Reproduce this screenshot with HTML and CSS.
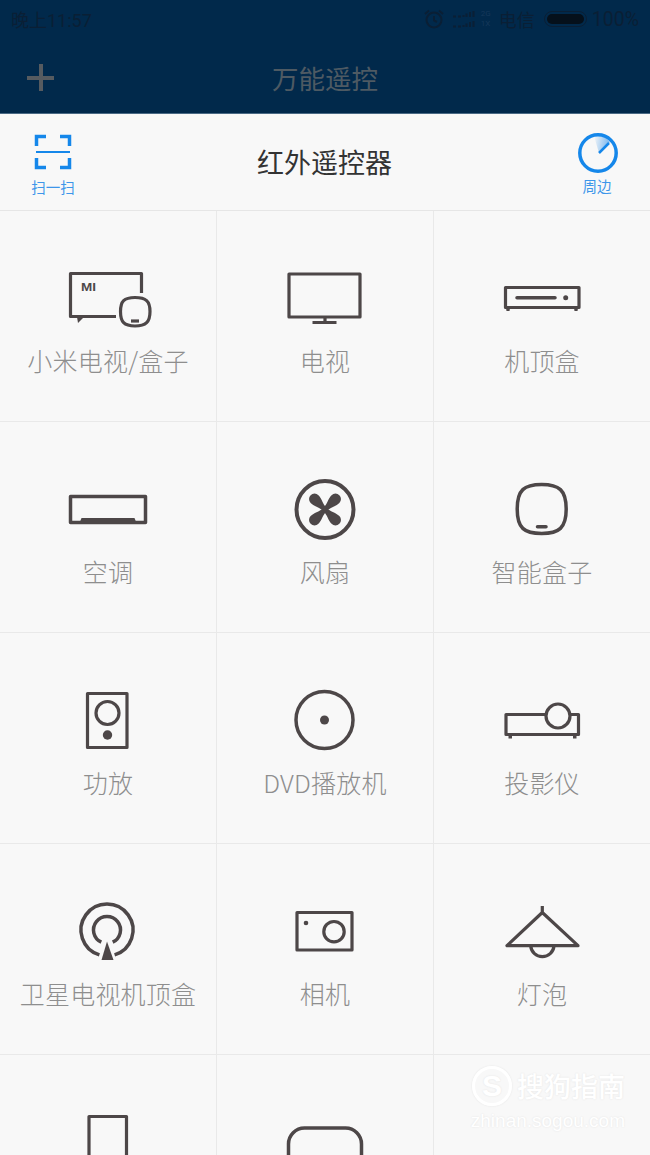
FILE: index.html
```html
<!DOCTYPE html>
<html lang="en">
<head>
    <meta charset="UTF-8">
    <meta name="viewport" content="width=device-width, initial-scale=1.0">
    <title>万能遥控</title>
    <link rel="stylesheet" href="styles.css">
</head>
<body>
    <div class="screen">
        <header class="top">
            <div class="status">
                <span class="time">晚上11:57</span>
                <div class="status-right">
                    <svg class="alarm" width="22" height="20" viewBox="0 0 22 20">
                        <circle cx="11" cy="11" r="7.5"/>
                        <path d="M11 7v4.5l3 1.5M2 5l4-3.5M20 5l-4-3.5"/>
                    </svg>
                    <svg class="signal" width="24" height="20" viewBox="0 0 24 20">
                        <path d="M1 7.500h3M6 7.500h3M11.500 8V6M14.500 8V4.500M18 8V3M21.500 8V2"/>
                        <path d="M1 17.500h3M6 17.500h3M11.500 18V16M14.500 18V14.500M18 18V13M21.500 18V12"/>
                    </svg>
                    <span class="net"><span>2G</span><span>1X</span></span>
                    <span class="carrier">电信</span>
                    <span class="battery"><span class="battery-fill"></span></span>
                    <span class="percent">100%</span>
                </div>
            </div>
            <div class="appbar">
                <span class="plus"></span>
                <h1>万能遥控</h1>
            </div>
        </header>

        <div class="subbar">
            <div class="tool tool-scan">
                <svg width="40" height="36" viewBox="0 0 40 36">
                    <path class="scan-corner" d="M13 2.5H3.500V12M27 2.5h9.500V12M3.500 24v9.500H13M36.500 24v9.500H27"/>
                    <path class="scan-line" d="M3 18h34"/>
                </svg>
                <span>扫一扫</span>
            </div>
            <h2>红外遥控器</h2>
            <div class="tool tool-near">
                <svg width="42" height="42" viewBox="0 0 42 42">
                    <defs>
                        <linearGradient id="sweep" x1="1" y1="0.5" x2="0" y2="0.3">
                            <stop offset="0" stop-color="#1b86e8" stop-opacity="0.6"/>
                            <stop offset="1" stop-color="#1b86e8" stop-opacity="0.04"/>
                        </linearGradient>
                    </defs>
                    <path d="M22 21L17 4A18 18 0 0 1 33 10Z" fill="url(#sweep)"/>
                    <circle class="radar" cx="21" cy="21" r="18.200"/>
                    <path class="radar-hand" d="M22 21L32 11"/>
                </svg>
                <span>周边</span>
            </div>
        </div>

        <div class="grid">
            <div class="cell">
                <svg class="icon" viewBox="0 0 90 70">
                    <path d="M53 55.500H7.500V12.500H78.500V32"/>
                    <path class="solid" d="M14 56h7l-6 6z"/>
                    <text class="mi" x="18" y="30" textLength="15" lengthAdjust="spacingAndGlyphs">MI</text>
                    <path d="M72 36.500C83 36.500 87 40 87 50.500C87 61 83 65 72 65C61 65 57.500 61 57.500 50.500C57.500 40 61 36.500 72 36.500Z"/>
                    <path d="M68 60h8"/>
                </svg>
                <span class="label">小米电视/盒子</span>
            </div>
            <div class="cell">
                <svg class="icon" viewBox="0 0 90 70">
                    <rect x="9" y="13" width="71" height="43"/>
                    <path d="M45 57v4M32.500 61.500h24"/>
                </svg>
                <span class="label">电视</span>
            </div>
            <div class="cell">
                <svg class="icon" viewBox="0 0 90 70">
                    <rect x="8.500" y="26.500" width="73.500" height="20"/>
                    <path class="thick" d="M20 36.700h38"/>
                    <circle class="solid" cx="68.700" cy="36.700" r="2.500"/>
                    <path class="solid" d="M9 47h4l-.5 3h-3zM77 47h4l-.5 3h-3z"/>
                </svg>
                <span class="label">机顶盒</span>
            </div>

            <div class="cell">
                <svg class="icon" viewBox="0 0 90 70">
                    <rect class="bold" x="7.500" y="24.500" width="75" height="26"/>
                    <path class="solid" d="M16.500 51l2-5h53l2 5z"/>
                </svg>
                <span class="label">空调</span>
            </div>
            <div class="cell">
                <svg class="icon" viewBox="0 0 90 70">
                    <circle class="heavy" cx="45" cy="37.500" r="28.500"/>
                    <g transform="translate(45 37.500)">
                        <path class="solid" d="M-2.200 0C-2.500 -6 -5.500 -10 -5.500 -14.800A5.500 5.500 0 0 1 5.500 -14.800C5.500 -10 2.500 -6 2.200 0Z" transform="rotate(45)"/>
                        <path class="solid" d="M-2.200 0C-2.500 -6 -5.500 -10 -5.500 -14.800A5.500 5.500 0 0 1 5.500 -14.800C5.500 -10 2.500 -6 2.200 0Z" transform="rotate(135)"/>
                        <path class="solid" d="M-2.200 0C-2.500 -6 -5.500 -10 -5.500 -14.800A5.500 5.500 0 0 1 5.500 -14.800C5.500 -10 2.500 -6 2.200 0Z" transform="rotate(225)"/>
                        <path class="solid" d="M-2.200 0C-2.500 -6 -5.500 -10 -5.500 -14.800A5.500 5.500 0 0 1 5.500 -14.800C5.500 -10 2.500 -6 2.200 0Z" transform="rotate(315)"/>
                    </g>
                </svg>
                <span class="label">风扇</span>
            </div>
            <div class="cell">
                <svg class="icon" viewBox="0 0 90 70">
                    <path class="bold" d="M44.700 12.500C62 12.500 69.200 18 69.200 37C69.200 56 62 61.500 44.700 61.500C27 61.500 20.200 56 20.200 37C20.200 18 27 12.500 44.700 12.500Z"/>
                    <path class="thick" d="M40.500 54.700h8.500"/>
                </svg>
                <span class="label">智能盒子</span>
            </div>

            <div class="cell">
                <svg class="icon" viewBox="0 0 90 70">
                    <rect x="24.500" y="10.500" width="39.500" height="54"/>
                    <circle cx="44.500" cy="30" r="11.500"/>
                    <circle class="solid" cx="44.500" cy="52" r="4.700"/>
                </svg>
                <span class="label">功放</span>
            </div>
            <div class="cell">
                <svg class="icon" viewBox="0 0 90 70">
                    <circle class="bold" cx="44.500" cy="37" r="28.500"/>
                    <circle class="solid" cx="44.500" cy="37" r="4.500"/>
                </svg>
                <span class="label">DVD播放机</span>
            </div>
            <div class="cell">
                <svg class="icon" viewBox="0 0 90 70">
                    <path d="M49 31.500H9V51.500H81.500V31.500H74"/>
                    <circle cx="61" cy="33" r="12"/>
                    <path class="solid" d="M11.500 52h3.500v3.500h-3.500zM76 52h3.500v3.500H76z"/>
                </svg>
                <span class="label">投影仪</span>
            </div>

            <div class="cell">
                <svg class="icon" viewBox="0 0 90 70">
                    <path class="bold" d="M36.400 60.900A26 26 0 1 1 51.600 60.900"/>
                    <path class="bold" d="M38.300 48.200A13.500 13.500 0 1 1 49.700 48.200"/>
                    <path class="solid" d="M44 47.500L50.500 66H38.500Z"/>
                </svg>
                <span class="label">卫星电视机顶盒</span>
            </div>
            <div class="cell">
                <svg class="icon" viewBox="0 0 90 70">
                    <rect x="17" y="18.500" width="55" height="37.500"/>
                    <circle cx="54" cy="37.700" r="10.200"/>
                    <circle class="solid" cx="26" cy="29" r="2.300"/>
                </svg>
                <span class="label">相机</span>
            </div>
            <div class="cell">
                <svg class="icon" viewBox="0 0 90 70">
                    <path d="M45.300 12v6.500M45.300 18.500L10 51.700H81Z"/>
                    <path d="M33.700 52A11.700 11.700 0 0 0 57 52"/>
                </svg>
                <span class="label">灯泡</span>
            </div>

            <div class="cell">
                <svg class="icon" viewBox="0 0 90 70">
                    <rect x="26" y="11.500" width="37.500" height="60"/>
                </svg>
            </div>
            <div class="cell">
                <svg class="icon" viewBox="0 0 90 70">
                    <rect class="bold" x="8.500" y="23" width="73" height="50" rx="16"/>
                </svg>
            </div>
            <div class="cell"></div>
        </div>

        <div class="watermark">
            <div class="wm-top">
                <span class="wm-logo">S</span>
                <span class="wm-name">搜狗指南</span>
            </div>
            <span class="wm-url">zhinan.sogou.com</span>
        </div>
    </div>
</body>
</html>
```

FILE: styles.css
```css
body {
    margin: 0;
    font-family: "Noto Sans CJK SC", "Noto Sans", sans-serif;
    background-color: #f8f8f8;
}

.screen {
    position: relative;
    width: 650px;
    height: 1155px;
    overflow: hidden;
}

/* dimmed header */
.top {
    height: 113px;
    background-color: #01294b;
    border-bottom: 1px solid #4a6a85;
}

.status {
    display: flex;
    justify-content: space-between;
    align-items: center;
    height: 37px;
    padding: 0 11px;
    font-family: "Roboto", "Noto Sans CJK SC", sans-serif;
    font-size: 18px;
    color: #0a1f35;
}

.status-right {
    display: flex;
    align-items: center;
}

.alarm {
    margin-right: 7px;
    fill: none;
    stroke: #0a1f35;
    stroke-width: 2;
}

.signal {
    margin-right: 5px;
    fill: none;
    stroke: #0a1f35;
    stroke-width: 2;
}

.net {
    display: flex;
    flex-direction: column;
    width: 18px;
    font-size: 8px;
    line-height: 10px;
    color: #15385a;
}

.carrier {
    margin-right: 9px;
    font-family: "Noto Sans CJK SC", sans-serif;
}

.battery {
    display: flex;
    align-items: center;
    width: 43px;
    height: 16px;
    margin-right: 5px;
    padding: 2px;
    box-sizing: border-box;
    border: 1px solid #0a1f35;
    border-radius: 8px;
}

.battery-fill {
    width: 100%;
    height: 100%;
    border-radius: 6px;
    background-color: #05101b;
}

.percent {
    margin-top: 2px;
    font-size: 19.5px;
}

.appbar {
    position: relative;
    display: flex;
    justify-content: center;
    align-items: center;
    height: 76px;
    padding-top: 6px;
    box-sizing: border-box;
}

.appbar h1 {
    margin: 0;
    font-size: 26.5px;
    font-weight: 400;
    line-height: 36px;
    color: #4e5a63;
}

.plus {
    position: absolute;
    left: 27px;
    top: 27px;
    width: 27px;
    height: 27px;
    background:
        linear-gradient(#565b60, #565b60) center / 100% 4px no-repeat,
        linear-gradient(#565b60, #565b60) center / 4px 100% no-repeat;
}

.subbar {
    display: flex;
    justify-content: space-between;
    align-items: flex-start;
    height: 96px;
    border-bottom: 1px solid #e6e6e6;
}

.subbar h2 {
    margin: 30px 2px 0 0;
    font-size: 27px;
    font-weight: 400;
    line-height: 36px;
    color: #333;
}

.tool {
    display: flex;
    flex-direction: column;
    align-items: center;
    font-size: 14.5px;
    line-height: 18px;
    color: #3d96ea;
}

.tool svg {
    display: block;
}

.tool-scan {
    width: 44px;
    margin: 20px 0 0 31px;
    gap: 8px;
}

.tool-near {
    width: 44px;
    margin: 18px 30px 0 0;
    gap: 3px;
}

.tool-near span {
    margin-right: 2px;
}

.scan-corner {
    fill: none;
    stroke: #1587ea;
    stroke-width: 3.500;
}

.scan-line {
    fill: none;
    stroke: #1587ea;
    stroke-width: 2;
}

.radar {
    fill: none;
    stroke: #1587ea;
    stroke-width: 3.500;
}

.radar-hand {
    fill: none;
    stroke: #1587ea;
    stroke-width: 2.500;
}

.grid {
    display: grid;
    grid-template-columns: 217px 217px 216px;
    grid-auto-rows: 211px;
}

.cell {
    display: flex;
    flex-direction: column;
    align-items: center;
    padding-top: 50px;
    box-sizing: border-box;
    border-right: 1px solid #e9e9e9;
    border-bottom: 1px solid #e9e9e9;
}

.cell:nth-child(3n) {
    border-right: 0;
}

.icon {
    display: block;
    flex: none;
    width: 90px;
    height: 70px;
    overflow: visible;
    fill: none;
    stroke: #4d4748;
    stroke-width: 3.200;
    stroke-linejoin: round;
}

.icon .solid {
    fill: #4d4748;
    stroke: none;
}

.icon .bold {
    stroke-width: 3.500;
}

.icon .heavy {
    stroke-width: 4;
}

.icon .thick {
    stroke-width: 3.500;
    stroke-linecap: round;
}

.icon .mi {
    font-family: "Liberation Sans", sans-serif;
    font-size: 10px;
    font-weight: 700;
    fill: #4d4748;
    stroke: none;
}

.label {
    margin-top: 14px;
    font-size: 25px;
    font-weight: 300;
    letter-spacing: 0.2px;
    line-height: 30px;
    color: #8e8e8e;
    white-space: nowrap;
}

/* photo watermark */
.watermark {
    position: absolute;
    right: 25px;
    top: 1064px;
    display: flex;
    flex-direction: column;
    align-items: flex-end;
    color: #fff;
    text-shadow: 0 0 2px #e2e2e2;
}

.wm-top {
    display: flex;
    align-items: center;
    gap: 5px;
}

.wm-logo {
    width: 34px;
    height: 34px;
    border: 3px solid #fff;
    border-radius: 50%;
    font-family: "Liberation Sans", sans-serif;
    font-size: 30px;
    font-weight: 700;
    line-height: 34px;
    text-align: center;
    box-shadow: 0 0 2px #e2e2e2;
}

.wm-name {
    font-size: 27px;
    font-weight: 500;
    line-height: 44px;
}

.wm-url {
    margin-top: 1px;
    font-family: "Liberation Sans", sans-serif;
    font-size: 19px;
    line-height: 24px;
}
```
